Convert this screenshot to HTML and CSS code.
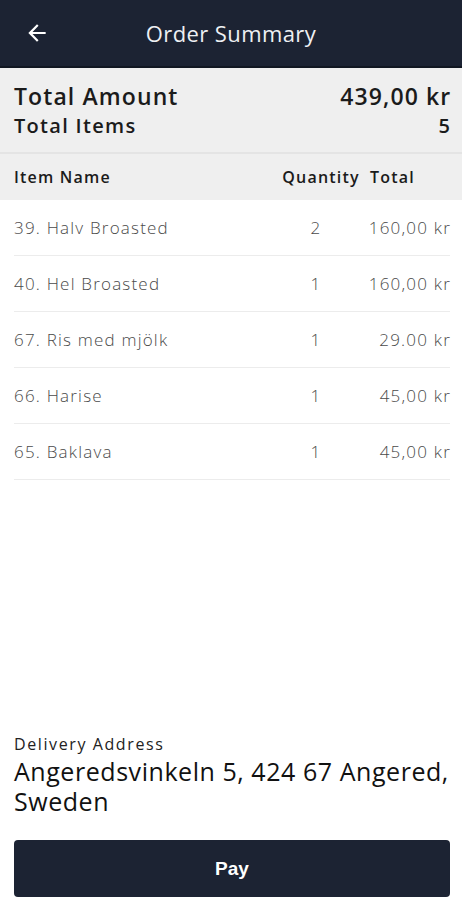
FILE: index.html
```html
<!DOCTYPE html>
<html lang="en">
<head>
  <meta charset="utf-8" />
  <title>Order Summary</title>
  <meta name="viewport" content="width=device-width, initial-scale=1" />
  <link rel="stylesheet" href="styles.css">
</head>
<body>
  <div class="screen">
    <header class="app-bar">
      <button class="back-btn" aria-label="Back">
        <svg width="24" height="24" viewBox="0 0 24 24"><path d="M20 11H7.83l5.59-5.59L12 4l-8 8 8 8 1.41-1.41L7.83 13H20v-2z" fill="#fff"/></svg>
      </button>
      <h1 class="title">Order Summary</h1>
    </header>

    <section class="totals">
      <div class="totals-row big">
        <span>Total Amount</span>
        <span class="num">439,00 kr</span>
      </div>
      <div class="totals-row">
        <span>Total Items</span>
        <span class="num">5</span>
      </div>
    </section>

    <div class="table-head">
      <span class="col-name">Item Name</span>
      <span class="col-qty">Quantity</span>
      <span class="col-total">Total</span>
    </div>

    <ul class="items">
      <li class="item"><span class="col-name">39. Halv Broasted</span><span class="col-qty">2</span><span class="col-total">160,00 kr</span></li>
      <li class="item"><span class="col-name">40. Hel Broasted</span><span class="col-qty">1</span><span class="col-total">160,00 kr</span></li>
      <li class="item"><span class="col-name">67. Ris med mjölk</span><span class="col-qty">1</span><span class="col-total">29.00 kr</span></li>
      <li class="item"><span class="col-name">66. Harise</span><span class="col-qty">1</span><span class="col-total">45,00 kr</span></li>
      <li class="item"><span class="col-name">65. Baklava</span><span class="col-qty">1</span><span class="col-total">45,00 kr</span></li>
    </ul>

    <footer class="bottom">
      <div class="addr-label">Delivery Address</div>
      <div class="addr"><span class="addr-line">Angeredsvinkeln 5, 424 67 Angered,</span> Sweden</div>
      <button class="pay-btn">Pay</button>
    </footer>
  </div>
</body>
</html>
```

FILE: styles.css
```css
* {
  box-sizing: border-box;
}
body {
  margin: 0;
  padding: 0;
  background: #fff;
  font-family: 'Open Sans', 'Lato', sans-serif;
  color: #1b1b1b;
}
.screen {
  height: 900px;
  display: flex;
  flex-direction: column;
}
.app-bar {
  height: 68px;
  background: #1c2333;
  display: flex;
  align-items: center;
  position: relative;
  border-bottom: 2px solid #111722;
}
.back-btn {
  background: none;
  border: none;
  padding: 0;
  margin-left: 24px;
  width: 26px;
  height: 26px;
  display: flex;
  align-items: center;
  justify-content: center;
}
.back-btn svg {
  width: 26px;
  height: 26px;
}
.title {
  position: absolute;
  left: 0;
  right: 0;
  text-align: center;
  margin: 0;
  font-size: 22px;
  font-weight: 400;
  letter-spacing: 0.4px;
  color: #eef0f3;
  pointer-events: none;
}
.totals {
  background: #efefef;
  padding: 13px 12px 12px 14px;
  border-bottom: 2px solid #e4e4e4;
}
.totals-row {
  display: flex;
  justify-content: space-between;
  font-size: 20px;
  font-weight: 600;
  line-height: 28px;
  letter-spacing: 1.3px;
}
.totals-row .num {
  margin-right: -1.3px;
}
.totals-row.big {
  font-size: 23px;
  line-height: 31px;
  letter-spacing: 1.1px;
}
.table-head {
  background: #efefef;
  height: 46px;
  display: flex;
  align-items: center;
  padding: 0 12px 0 14px;
  font-size: 16px;
  font-weight: 600;
  letter-spacing: 1.2px;
}
.col-name {
  flex: 1;
}
.col-qty {
  width: 90px;
  text-align: center;
}
.col-total {
  width: 84px;
  text-align: left;
  padding-left: 4px;
}
.items {
  list-style: none;
  margin: 0;
  padding: 0 12px 0 14px;
}
.item {
  display: flex;
  align-items: center;
  height: 56px;
  border-bottom: 1px solid #ececec;
  font-size: 17px;
  font-weight: 300;
  letter-spacing: 1.2px;
  color: #4a4a4a;
}
.item .col-qty {
  padding-right: 12px;
}
.item .col-total {
  text-align: right;
  padding-left: 0;
  margin-right: -1px;
}
.bottom {
  margin-top: auto;
  padding: 0 10px 3px 14px;
}
.addr-label {
  font-size: 16px;
  font-weight: 500;
  line-height: 22px;
  letter-spacing: 1.6px;
  color: #222;
}
.addr {
  font-size: 25px;
  font-weight: 500;
  line-height: 30px;
  margin-top: 1px;
  letter-spacing: 0.55px;
  color: #111;
}
.addr-line {
  white-space: nowrap;
}
.pay-btn {
  margin-top: 24px;
  width: calc(100% - 2px);
  height: 57px;
  background: #1c2333;
  border: none;
  border-radius: 4px;
  color: #fff;
  font-family: 'Liberation Sans', sans-serif;
  font-size: 19px;
  font-weight: 700;
}
```
